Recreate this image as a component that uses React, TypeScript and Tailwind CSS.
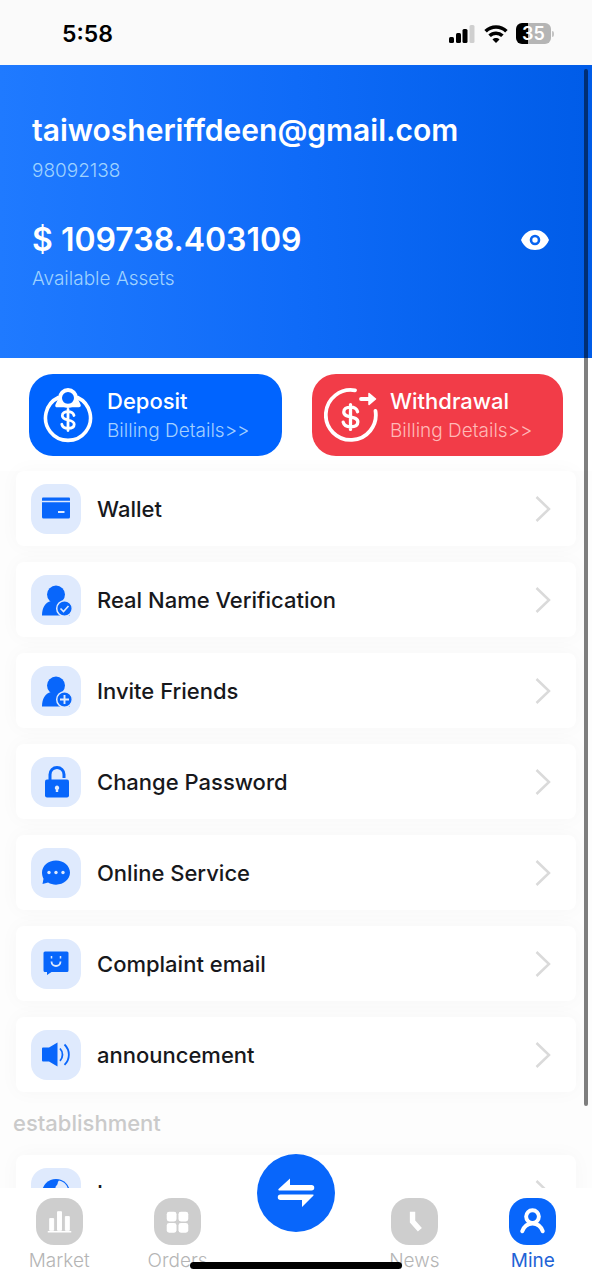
import type { ReactNode } from "react";

type Item = { label: string; icon: ReactNode }

const SignalIcon = () => (
  <svg viewBox="0 0 27 18" className="h-[18px] w-[27px]" aria-hidden="true">
    <rect x="0" y="12" width="5" height="6" rx="1.5" />
    <rect x="7" y="8" width="5" height="10" rx="1.5" />
    <rect x="13.500" y="4" width="5" height="14" rx="1.5" />
    <rect x="20.500" y="0" width="5" height="18" rx="1.5" fill="#cfcfcf" />
  </svg>
);

const WifiIcon = () => (
  <svg viewBox="0 0 24 18" className="h-[18px] w-6" fill="none" stroke="#000" strokeWidth="3.6" aria-hidden="true">
    <path d="M1.600 6.300c5.800-5.700 15-5.700 20.800 0" />
    <path d="M5.600 10.800c3.600-3.500 9.200-3.500 12.800 0" />
    <path d="M12 18l-3.500-3.600c2-1.900 5-1.900 7 0z" fill="#000" stroke="none" />
  </svg>
);

const EyeIcon = () => (
  <svg viewBox="0 0 28 22" className="h-[22px] w-7" aria-hidden="true">
    <path d="M0 11C3 4 8 1 14 1S25 4 28 11c-3 7-8 10-14 10S3 18 0 11z" fill="#fff" />
    <circle cx="14" cy="11" r="4" fill="#fff" stroke="#0764f1" strokeWidth="2.600" />
  </svg>
);

// centred on the origin
const DollarSign = () => (
  <path d="M6-4.500C5.200-7.300 3-8.300 0-8.300c-3.500 0-5.700 1.500-5.700 4C-5.700 1.500 6.200-1.500 6.200 4.200 6.200 6.800 3.700 8.300 0 8.300c-3.200 0-5.500-1.200-6.200-4M0-10.500v21" strokeWidth="2.800" />
);

const DepositIcon = () => (
  <svg viewBox="0 0 50 56" className="h-14 w-[50px] shrink-0" fill="none" stroke="#fff" strokeWidth="3.6" strokeLinecap="round" strokeLinejoin="round" aria-hidden="true">
    <path d="M15.500 10.500a22.500 22.500 0 1 0 19 0" />
    <circle cx="25" cy="11" r="8" strokeWidth="4" />
    <path d="M17 12l-3 6.500h22L33 12" />
    <g transform="translate(25 33)"><DollarSign /></g>
  </svg>
);

const WithdrawIcon = () => (
  <svg viewBox="0 0 54 56" className="h-14 w-[54px] shrink-0" fill="none" stroke="#fff" strokeWidth="3.8" strokeLinecap="round" strokeLinejoin="round" aria-hidden="true">
    <path d="M31 3.300A25 25 0 1 0 51.500 24" />
    <path d="M37 12h10" />
    <path d="M45 6.500v11l6.500-5.500z" fill="#fff" strokeWidth="1.500" />
    <g transform="translate(26.500 30) scale(1.180)"><DollarSign /></g>
  </svg>
);

const WalletIcon = () => (
  <svg viewBox="0 0 50 50" className="size-[50px]" aria-hidden="true">
    <path d="M11 14.500a1 1 0 0 1 1-1h26a1 1 0 0 1 1 1v2.300H11z" />
    <path d="M11 18.300h28v14.700a1.500 1.500 0 0 1-1.500 1.500h-25A1.500 1.500 0 0 1 11 33z" />
    <path d="M27 28h6.500" stroke="#dfeafd" strokeWidth="2" />
  </svg>
);

const PersonIcon = ({ children }: { children: ReactNode }) => (
  <svg viewBox="0 0 50 50" className="size-[50px]" aria-hidden="true">
    <circle cx="25" cy="19.500" r="9" />
    <path d="M20 26h10l9 14.500H11C11 33 14 27.500 20 26z" />
    <circle cx="33.500" cy="33.500" r="7.800" stroke="#dfeafd" strokeWidth="1.500" />
    {children}
  </svg>
);

const LockIcon = () => (
  <svg viewBox="0 0 50 50" className="size-[50px]" aria-hidden="true">
    <path d="M19 24v-6.500a7 7 0 0 1 14 0V21" fill="none" stroke="#0866fb" strokeWidth="3" />
    <rect x="14" y="22.500" width="24" height="18" rx="2" />
    <path d="M26 28.500a2.300 2.300 0 0 1 1.200 4.200V35h-2.400v-2.300a2.300 2.300 0 0 1 1.200-4.200z" fill="#dfeafd" />
  </svg>
);

const ChatIcon = () => (
  <svg viewBox="0 0 50 50" className="size-[50px]" aria-hidden="true">
    <path d="M25 12.500c7.800 0 14 5.400 14 12.100s-6.200 12.100-14 12.100c-3 0-5.600-.8-7.900-2.100L11.500 36l1-5.300c-1-1.900-1.500-3.900-1.500-6.100 0-6.700 6.200-12.100 14-12.100z" />
    <g fill="#dfeafd">
      <circle cx="18" cy="24.500" r="1.700" />
      <circle cx="25" cy="24.500" r="1.700" />
      <circle cx="32" cy="24.500" r="1.700" />
    </g>
  </svg>
);

const SmileIcon = () => (
  <svg viewBox="0 0 50 50" className="size-[50px]" aria-hidden="true">
    <path d="M14 12.500h22a1.500 1.500 0 0 1 1.500 1.500v17.500a1.500 1.500 0 0 1-1.500 1.500H20.500L16 36v-3h-2a1.500 1.500 0 0 1-1.500-1.500V14a1.500 1.500 0 0 1 1.500-1.500z" />
    <path d="M20.500 22.500c0 6 9 6 9 0" fill="none" stroke="#dfeafd" strokeWidth="1.800" />
    <path d="M20.500 17v2.500M29.500 17v2.500" stroke="#dfeafd" strokeWidth="1.500" />
  </svg>
);

const SpeakerIcon = () => (
  <svg viewBox="0 0 50 50" className="size-[50px]" aria-hidden="true">
    <path d="M12 17.500h6l8.500-5v24l-8.500-5h-6a1 1 0 0 1-1-1v-12a1 1 0 0 1 1-1z" />
    <path d="M29 18.500c3.300 3.500 3.300 8.800 0 12.300M33.500 14.500c5.800 5.800 5.800 14.500 0 20.300" fill="none" stroke="#0866fb" strokeWidth="1.800" />
  </svg>
);

const GlobeIcon = () => (
  <svg viewBox="0 0 50 50" className="size-[50px]" aria-hidden="true">
    <circle cx="25" cy="25" r="14" />
    <path d="M28 12.500c-2 2-.5 3-2.500 5s-1 4 2 5 4 4 7 3 3-5 1-8-4-4-7.500-5z" fill="#dfeafd" />
  </svg>
);

const items: Item[] = [
  { label: "Wallet", icon: <WalletIcon /> },
  { label: "Real Name Verification", icon: <PersonIcon><path d="M29.500 33.500l3 3 5-5.500" fill="none" stroke="#dfeafd" strokeWidth="1.600" /></PersonIcon> },
  { label: "Invite Friends", icon: <PersonIcon><path d="M29 33.500h9M33.500 29v9" stroke="#dfeafd" strokeWidth="1.900" /></PersonIcon> },
  { label: "Change Password", icon: <LockIcon /> },
  { label: "Online Service", icon: <ChatIcon /> },
  { label: "Complaint email", icon: <SmileIcon /> },
  { label: "announcement", icon: <SpeakerIcon /> },
];

const Row = ({ label, icon }: Item) => (
  <button type="button" className="flex h-[75px] w-full items-center gap-4 rounded-lg bg-white pr-[25px] pl-[15px] text-left shadow-[0_0_20px_rgba(0,0,0,0.03)]">
    <span className="size-[50px] shrink-0 rounded-2xl bg-[#dfeafd] fill-[#0866fb]">{icon}</span>
    <span className="flex-1 text-[22px] leading-7 font-medium text-[#17181c]">{label}</span>
    <svg viewBox="0 0 16 28" className="h-7 w-4" fill="none" stroke="#dadada" strokeWidth="2.5" aria-hidden="true">
      <path d="M1.500 2L14 14 1.500 26" />
    </svg>
  </button>
);

type CardProps = { title: string; className: string; textClassName: string; icon: ReactNode }

const ActionCard = ({ title, className, textClassName, icon }: CardProps) => (
  <button type="button" className={`flex h-[82px] flex-1 items-center rounded-3xl text-left ${className}`}>
    {icon}
    <span className="flex flex-col pt-0.5">
      <span className="text-[22px] leading-[30px] font-medium text-white">{title}</span>
      <span className={`text-[19px] leading-[30px] font-light ${textClassName}`}>Billing Details&gt;&gt;</span>
    </span>
  </button>
);

const tabs: (Item & { active?: boolean })[] = [
  {
    label: "Market",
    icon: (
      <>
        <path d="M14 21h4v12h-4zM22 14h4v19h-4zM30 19h4v14h-4z" fill="#fff" stroke="#fff" strokeWidth="1" />
        <path d="M12 34.500h24" stroke="#fff" strokeWidth="1.500" />
      </>
    ),
  },
  {
    label: "Orders",
    icon: (
      <g fill="#fff">
        <rect x="13" y="14" width="10" height="10" rx="2.500" />
        <rect x="25" y="14" width="10" height="10" rx="2.500" />
        <rect x="13" y="25.500" width="10" height="10" rx="2.500" />
        <rect x="25" y="25.500" width="10" height="10" rx="2.500" />
      </g>
    ),
  },
  {
    label: "News",
    icon: <path d="M22 14v10l7.500 8.500" fill="none" stroke="#fff" strokeWidth="5.500" />,
  },
  {
    label: "Mine",
    active: true,
    icon: (
      <g fill="none" stroke="#fff" strokeWidth="4" strokeLinecap="round">
        <circle cx="24" cy="19" r="6.500" />
        <path d="M13.500 34c2-5.500 5.500-8 10.500-8s8.500 2.500 10.500 8" />
      </g>
    ),
  },
];

const Tab = ({ label, icon, active }: Item & { active?: boolean }) => (
  <a href="#" aria-current={active ? "page" : undefined} className="flex flex-col items-center gap-1 pt-2.5">
    <svg viewBox="0 0 48 48" className={`size-[47px] rounded-[18px] ${active ? "bg-[#0866fb]" : "bg-[#cecece]"}`} aria-hidden="true">{icon}</svg>
    <span className={`text-[19px] leading-6 ${active ? "text-[#1f63d6]" : "font-light text-[#b5b5b5]"}`}>{label}</span>
  </a>
);

const App = () => (
  <div className="relative flex h-screen flex-col bg-[#fdfdfd] font-['Inter',sans-serif]">
    <div className="flex h-[65px] shrink-0 items-center justify-between bg-[#fafafa] pt-0.5 pr-[38px] pl-[62px]">
      <span className="text-[23px] leading-7 font-semibold text-black">5:58</span>
      <div className="flex items-center gap-2">
        <SignalIcon />
        <WifiIcon />
        <div className="flex items-center gap-px">
          <span className="flex h-[21px] w-[35px] items-center justify-center rounded-md bg-linear-to-r from-black from-33% to-[#b5b5b5] to-33% text-[18px] leading-5 font-semibold text-white">35</span>
          <span className="h-1.5 w-0.5 rounded-r-sm bg-[#c4c4c4]" />
        </div>
      </div>
    </div>

    <main className="min-h-0 flex-1 overflow-hidden">
      <header className="bg-linear-to-r from-[#1f7aff] via-[#0f6bf8] to-[#005ce8] px-8 pt-[47px] pb-[67px] text-white">
        <h1 className="text-[30px] leading-9 font-semibold">taiwosheriffdeen@gmail.com</h1>
        <p className="mt-[11px] text-[19px] leading-6 font-light text-[#9fd2ff]">98092138</p>
        <div className="mt-[39px] flex items-center justify-between pr-[11px]">
          <p className="text-[32px] leading-9 font-semibold">$ 109738.403109</p>
          <button type="button" aria-label="Hide balance"><EyeIcon /></button>
        </div>
        <p className="mt-[9px] text-[19px] leading-6 font-light text-[#9fd2ff]">Available Assets</p>
      </header>

      <div className="flex gap-[30px] bg-white px-[29px] pt-4 pb-[15px]">
        <ActionCard title="Deposit" className="gap-[14px] bg-[#0064ff] pl-[14px]" textClassName="text-[#a3d0ff]" icon={<DepositIcon />} />
        <ActionCard title="Withdrawal" className="gap-3 bg-[#f23c48] pl-3" textClassName="text-[#ffb9b7]" icon={<WithdrawIcon />} />
      </div>

      <div className="flex flex-col gap-4 px-4">
        {items.map((item) => <Row key={item.label} {...item} />)}
      </div>
      <h2 className="mt-4 mb-[17px] px-[13px] text-[22px] leading-[30px] font-medium text-[#cacaca]">establishment</h2>
      <div className="px-4">
        <Row label="Language" icon={<GlobeIcon />} />
      </div>
    </main>

    <nav className="relative grid h-[92px] shrink-0 grid-cols-5 bg-white">
      {tabs.slice(0, 2).map((tab) => <Tab key={tab.label} {...tab} />)}
      <div className="flex justify-center">
        <button type="button" aria-label="Trade" className="-mt-[34px] size-[78px] rounded-full bg-[#0866fb]">
          <svg viewBox="0 0 78 78" className="size-full" fill="#fff" aria-hidden="true">
            <path d="M21.500 35L33 24.500V31h21.500a2.700 2.700 0 0 1 0 5.500h-32.500a1 1 0 0 1-.5-1.500z" />
            <path d="M56.500 41.500L45 53v-7H23.500a2.700 2.700 0 0 1 0-5.500H56a.7.700 0 0 1 .5 1z" />
          </svg>
        </button>
      </div>
      {tabs.slice(2).map((tab) => <Tab key={tab.label} {...tab} />)}
      <span className="absolute bottom-[11px] left-1/2 h-[7px] w-[212px] -translate-x-1/2 rounded-full bg-black" />
    </nav>

    {/* scroll indicator */}
    <span className="absolute top-[69px] right-1 bottom-[174px] w-1 rounded-full bg-black/50" />
  </div>
);

export default App
